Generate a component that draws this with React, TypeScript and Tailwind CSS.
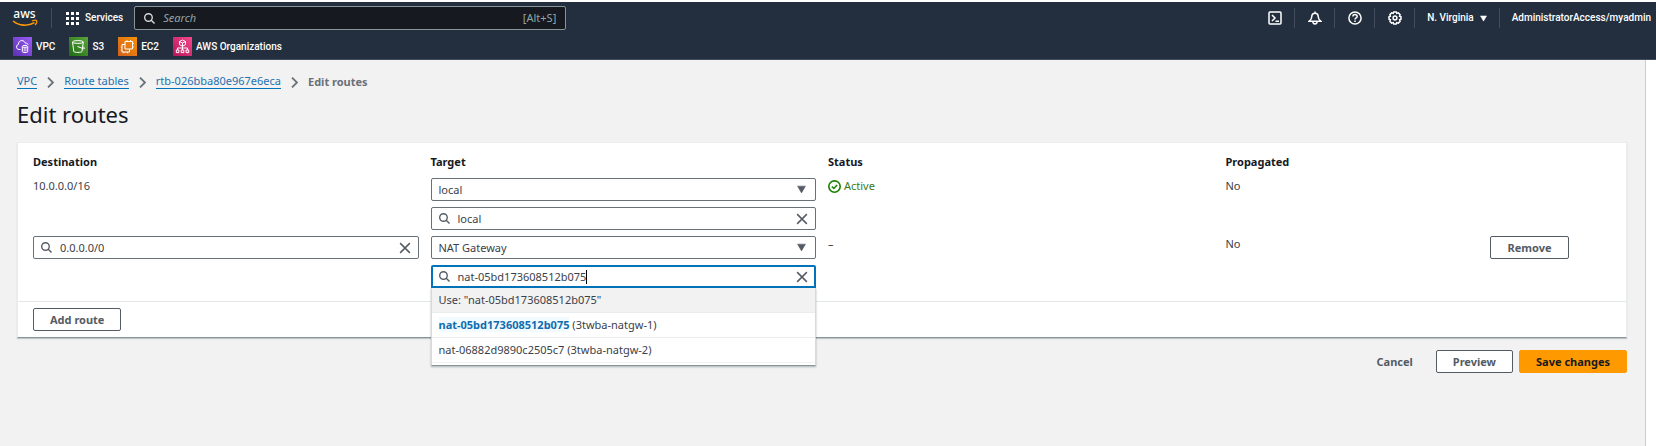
import React from "react";

function SearchIcon({ className }: { className: string }) {
  return (
    <svg className={className} viewBox="0 0 16 16" fill="none" stroke="currentColor" strokeWidth="2" aria-hidden="true">
      <circle cx="6.5" cy="6.5" r="5.500" />
      <path d="M15.300 15.300l-4.800-4.800" />
    </svg>
  );
}

function CloseIcon({ className }: { className: string }) {
  return (
    <svg className={className} viewBox="0 0 16 16" fill="none" stroke="currentColor" strokeWidth="2" aria-hidden="true">
      <path d="M1.500 1.500l13 13M14.500 1.500l-13 13" />
    </svg>
  );
}

function Caret({ className }: { className: string }) {
  return (
    <svg className={className} viewBox="0 0 16 16" fill="currentColor" aria-hidden="true">
      <path d="M1 2h14L8 14z" stroke="currentColor" strokeLinejoin="round" />
    </svg>
  );
}

function Chevron() {
  return (
    <svg className="mt-px h-[11px] w-[7px] text-[#687078]" viewBox="0 0 7 11" fill="none" stroke="currentColor" strokeWidth="1.800" aria-hidden="true">
      <path d="M1 .6l5 4.900-5 4.900" />
    </svg>
  );
}

function AwsLogo() {
  return (
    <svg className="size-7" viewBox="0 0 28 28" aria-hidden="true">
      <text x="12.500" y="14" textAnchor="middle" fill="#fff" fontSize="12" fontWeight="500" fontFamily="Noto Sans, sans-serif">aws</text>
      <path d="M1 17c6 5 15 5.500 21.500 1.600" fill="none" stroke="#f90" strokeWidth="1.600" />
      <path d="M20 17c2-.8 4.300-.9 4.600-.3s-.2 2.900-1.500 4.300" fill="none" stroke="#f90" strokeWidth="1.200" />
    </svg>
  );
}

function VpcGlyph() {
  return (
    <g>
      <path d="M7.500 12.500H6a2.600 2.600 0 0 1-.6-5.100C5.300 5 6.900 3.600 8.900 3.600c1.600 0 2.900 1 3.300 2.500 1.500-.1 2.600.5 3 1.600" />
      <path d="M9.300 9.500v5.300c0 1 5.400 1 5.400 0V9.500" />
      <ellipse cx="12" cy="9.400" rx="2.700" ry="1" />
      <path d="M11.200 11v3.500M12.900 11v3.500" strokeWidth=".8" />
    </g>
  );
}

function S3Glyph() {
  return (
    <g>
      <path d="M3.500 5l1.300 9.500c.2 1.200 8 1.200 8.200 0L14.300 5" />
      <ellipse cx="8.900" cy="5" rx="5.400" ry="1.400" />
      <path d="M8.500 9.500l6 2.300c1.500.3 1.200-1.300-.8-2.300" />
    </g>
  );
}

function Ec2Glyph() {
  return (
    <g>
      <path d="M7 4.500h7.500V12H7z" />
      <path d="M7 7.500H4V15h7.500v-3" />
      <path d="M9 3v1.500M12.500 3v1.500M14.500 6.500H16M14.500 10H16M4 10H2.700M4 13H2.700M6 15v1.300M9.500 15v1.300" strokeWidth=".8" />
    </g>
  );
}

function OrgGlyph() {
  return (
    <g>
      <path d="M9.500 3l3 1.500v3.200l-3 1.500-3-1.500V4.500zM6.500 4.500l3 1.500 3-1.500M9.500 6v3" />
      <path d="M9.500 9v4M4.500 13v-2h10v2" />
      <path d="M3.300 13h2.600v2.600H3.300zM8.200 13h2.600v2.600H8.200zM13.100 13h2.600v2.600h-2.600z" />
    </g>
  );
}

const services = [
  { name: "VPC", from: "#5a30b5", to: "#9a5cf5", glyph: <VpcGlyph /> },
  { name: "S3", from: "#1f6b14", to: "#5da53a", glyph: <S3Glyph /> },
  { name: "EC2", from: "#d0601a", to: "#f99208", glyph: <Ec2Glyph /> },
  { name: "AWS Organizations", from: "#b8145a", to: "#f5488a", glyph: <OrgGlyph /> },
];

const utilities = [
  {
    name: "CloudShell",
    glyph: (
      <g>
        <rect x="1" y="1" width="12" height="12" rx="1" />
        <path d="M4 4l3 3-3 3M7.500 10.300H11" />
      </g>
    ),
  },
  {
    name: "Notifications",
    glyph: (
      <g>
        <path d="M7 .5v1.700M7 2.200c-2 0-3.200 1.400-3.200 3.300 0 2-.6 3.200-2.500 4.700h11.400c-1.900-1.500-2.500-2.700-2.500-4.700C10.200 3.600 9 2.200 7 2.200z" />
        <path d="M4.900 10.500c0 3.200 4.200 3.200 4.200 0" />
      </g>
    ),
  },
  {
    name: "Help",
    glyph: (
      <g>
        <circle cx="7" cy="7" r="6.100" />
        <path d="M4.900 5.600C4.900 2.900 9.200 3 9.200 5.400 9.200 6.900 7 6.800 7 8.500M7 9.500v1.500" />
      </g>
    ),
  },
  {
    name: "Settings",
    glyph: (
      <g>
        <path d="M5.700 1h2.600l.5 1.400 1.600-.5 1.700 1.700-.5 1.600 1.400.5v2.600l-1.400.5.5 1.600-1.700 1.700-1.600-.5-.5 1.400H5.700l-.5-1.400-1.600.5-1.700-1.700.5-1.600L1 8.300V5.700l1.400-.5-.5-1.600 1.700-1.700 1.600.5z" />
        <circle cx="7" cy="7" r="1.900" />
      </g>
    ),
  },
];

function Field({ label, value, focused = false }: { label: string; value: string; focused?: boolean }) {
  return (
    <div
      className={
        focused
          ? "flex h-[23px] items-center rounded-t-[2px] border-2 border-[#0073bb] bg-white px-[6px] text-[#545b64]"
          : "flex h-[23px] items-center rounded-[2px] border border-[#687078] bg-white px-[7px] text-[#545b64]"
      }
    >
      <SearchIcon className="mr-2 size-[11px] shrink-0" />
      <input
        aria-label={label}
        defaultValue={value}
        className={
          focused
            ? "min-w-0 bg-transparent leading-4 text-[#3b4149] outline-none [field-sizing:content]"
            : "min-w-0 flex-1 bg-transparent leading-4 text-[#3b4149] outline-none"
        }
      />
      {focused && <span className="h-[14px] w-px bg-black" />}
      <button type="button" className="ml-auto" aria-label={"Clear " + label}>
        <CloseIcon className="size-3" />
      </button>
    </div>
  );
}

const targets = ["local", "NAT Gateway", "Internet Gateway"];

function TargetSelect({ label, value }: { label: string; value: string }) {
  return (
    <div className="grid h-[23px] grid-cols-[1fr_18px] items-center rounded-[2px] border border-[#687078] bg-white">
      <select
        aria-label={label}
        defaultValue={value}
        className="col-span-2 col-start-1 row-start-1 h-full appearance-none bg-transparent pl-[7px] leading-4 text-[#3b4149] outline-none"
      >
        {targets.map((o) => (
          <option key={o}>{o}</option>
        ))}
      </select>
      <Caret className="pointer-events-none col-start-2 row-start-1 size-[9px] text-[#545b64]" />
    </div>
  );
}

const outlineButton =
  "h-[23px] rounded-[2px] border border-[#545b64] bg-white px-4 font-bold leading-4 text-[#545b64]";
const crumb = "border-b border-[#0073bb] text-[#2471b0]";
const th = "pb-2 pr-3 text-left font-bold text-[#16191f]";
const td = "pb-[6px] pr-3 align-top";

export default function App() {
  return (
    <div className="flex min-h-screen flex-col bg-white pt-[2px] font-['Noto_Sans',sans-serif] text-[11px] leading-4 text-[#3b4149]">
      <header className="border-b border-[#414d5c] bg-[#232f3e] pb-[3px] font-['Roboto',sans-serif] text-[10px] font-medium text-white">
        <div className="flex h-8 items-center">
          <a href="#home" aria-label="AWS home" className="ml-3">
            <AwsLogo />
          </a>
          <span className="ml-[11px] h-5 w-px bg-[#414d5c]" />
          <button type="button" className="ml-[14px] flex items-center gap-[6px]">
            <svg className="size-[13px]" viewBox="0 0 13 13" fill="#fff" aria-hidden="true">
              {[0, 5, 10].map((y) => [0, 5, 10].map((x) => <rect key={x + "-" + y} x={x} y={y} width="3" height="3" />))}
            </svg>
            Services
          </button>
          <label className="ml-[11px] flex h-6 w-[432px] items-center gap-2 rounded-[2px] border border-[#879596] bg-[#16191f] px-[9px] font-['Noto_Sans',sans-serif] text-[11px] font-normal text-[#d5dbdb]">
            <SearchIcon className="size-[11px]" />
            <input aria-label="Search" placeholder="Search" className="min-w-0 flex-1 bg-transparent italic outline-none placeholder:text-[#95a5a6]" />
            <span className="text-[#95a5a6]">[Alt+S]</span>
          </label>
          <div className="ml-auto flex items-center pr-[5px]">
            {utilities.map((u) => (
              <button key={u.name} type="button" aria-label={u.name} className="flex h-5 w-10 items-center justify-center border-r border-[#414d5c]">
                <svg className="size-[14px]" viewBox="0 0 14 14" fill="none" stroke="#fff" strokeWidth="1.500" aria-hidden="true">
                  {u.glyph}
                </svg>
              </button>
            ))}
            <button type="button" className="flex h-5 items-center gap-[6px] border-r border-[#414d5c] px-3">
              N. Virginia
              <Caret className="size-[7px]" />
            </button>
            <button type="button" className="h-5 pl-3">AdministratorAccess/myadmin</button>
          </div>
        </div>
        <nav aria-label="Favorites" className="flex gap-[14px] pl-[13px] pt-[3px]">
          {services.map((s, i) => (
            <a key={s.name} href={"#" + s.name} className="flex items-center gap-1">
              <svg className="size-[19px]" viewBox="0 0 19 19" fill="none" stroke="#fff" strokeWidth="1" aria-hidden="true">
                <defs>
                  <linearGradient id={"tile" + i} x1="0" y1="1" x2="1" y2="0">
                    <stop offset="0" stopColor={s.from} />
                    <stop offset="1" stopColor={s.to} />
                  </linearGradient>
                </defs>
                <rect width="19" height="19" fill={"url(#tile" + i + ")"} stroke="none" />
                {s.glyph}
              </svg>
              {s.name}
            </a>
          ))}
        </nav>
      </header>

      <main className="mr-[10px] flex-1 border-r border-[#c8cccc] bg-[#f2f2f2] pl-[17px] pr-[18px] pt-[14px]">
        <nav aria-label="Breadcrumb" className="flex items-center gap-[10px] leading-[14px]">
          <a href="#vpc" className={crumb}>VPC</a>
          <Chevron />
          <a href="#tables" className={crumb}>Route tables</a>
          <Chevron />
          <a href="#rtb" className={crumb}>rtb-026bba80e967e6eca</a>
          <Chevron />
          <span className="font-bold text-[#687078]">Edit routes</span>
        </nav>
        <h1 className="mt-[11px] text-[22px] leading-7 text-[#16191f]">Edit routes</h1>

        <section className="mt-[14px] border border-[#eaeded] border-b-[#879596] bg-white shadow-[0_1px_1px_0_rgba(0,28,36,0.2)]">
          <div className="pb-[7px] pl-[15px] pr-[3px] pt-[11px]">
            <table className="w-full table-fixed">
              <thead>
                <tr>
                  <th className={"w-3/12 " + th}>Destination</th>
                  <th className={"w-3/12 " + th}>Target</th>
                  <th className={"w-3/12 " + th}>Status</th>
                  <th className={"w-2/12 " + th}>Propagated</th>
                  <th className={"w-1/12 " + th} aria-label="Actions" />
                </tr>
              </thead>
              <tbody>
                <tr>
                  <td className={td}>10.0.0.0/16</td>
                  <td className={td}>
                    <div className="flex flex-col gap-[6px]">
                      <TargetSelect label="Target type of route 1" value="local" />
                      <Field label="Target of route 1" value="local" />
                    </div>
                  </td>
                  <td className={td}>
                    <span className="flex items-center gap-[3px] text-[#3a7a1e]">
                      <svg className="size-[13px]" viewBox="0 0 16 16" fill="none" stroke="#1d8102" strokeWidth="2" aria-hidden="true">
                        <circle cx="8" cy="8" r="7" />
                        <path d="M4.800 8l2.400 2.400 4-4.300" />
                      </svg>
                      Active
                    </span>
                  </td>
                  <td className={td}>No</td>
                  <td className={td} />
                </tr>
                <tr>
                  <td className={td}>
                    <Field label="Destination of route 2" value="0.0.0.0/0" />
                  </td>
                  <td className={td}>
                    <div className="flex flex-col gap-[6px]">
                      <TargetSelect label="Target type of route 2" value="NAT Gateway" />
                      <div className="relative">
                        <Field label="Target of route 2" value="nat-05bd173608512b075" focused />
                        <ul className="absolute inset-x-0 top-full z-10 border-x border-b border-[#d5dbdb] border-b-[#879596] bg-white pb-[2px] shadow-[0_1px_2px_0_rgba(0,28,36,0.3)]">
                          <li className="h-[25px] border-b border-[#eaeded] bg-[#f2f2f2] px-[7px] py-1">Use: "nat-05bd173608512b075"</li>
                          <li className="h-[25px] border-b border-[#eaeded] px-[7px] py-1">
                            <mark className="bg-[#f1faff] font-bold text-[#0f6cb0]">nat-05bd173608512b075</mark> (3twba-natgw-1)
                          </li>
                          <li className="h-[25px] border-b border-[#f2f3f3] px-[7px] py-1">nat-06882d9890c2505c7 (3twba-natgw-2)</li>
                        </ul>
                      </div>
                    </div>
                  </td>
                  <td className={td}>–</td>
                  <td className={td}>No</td>
                  <td className={td}>
                    <button type="button" className={outlineButton}>Remove</button>
                  </td>
                </tr>
              </tbody>
            </table>
          </div>
          <div className="border-t border-[#e3e6e6] px-[15px] py-[6px]">
            <button type="button" className={outlineButton}>Add route</button>
          </div>
        </section>

        <div className="mt-3 flex justify-end gap-[6px]">
          <button type="button" className="h-[23px] border border-transparent px-4 font-bold text-[#545b64]">Cancel</button>
          <button type="button" className={outlineButton}>Preview</button>
          <button type="button" className="h-[23px] rounded-[2px] border border-[#ff9900] bg-[#ff9900] px-4 font-bold text-[#16191f]">Save changes</button>
        </div>
      </main>
    </div>
  );
}
